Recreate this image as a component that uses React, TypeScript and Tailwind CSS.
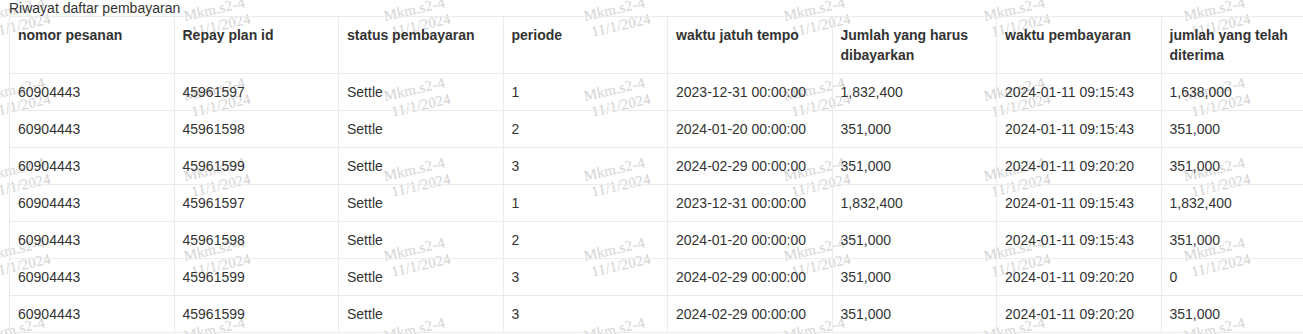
type PaymentRow = {
  orderNo: string;
  repayPlanId: string;
  status: string;
  period: string;
  dueAt: string;
  amountDue: string;
  paidAt: string;
  amountReceived: string;
};

const columns = [
  'nomor pesanan',
  'Repay plan id',
  'status pembayaran',
  'periode',
  'waktu jatuh tempo',
  'Jumlah yang harus dibayarkan',
  'waktu pembayaran',
  'jumlah yang telah diterima',
];

const rows: PaymentRow[] = [
  { orderNo: '60904443', repayPlanId: '45961597', status: 'Settle', period: '1', dueAt: '2023-12-31 00:00:00', amountDue: '1,832,400', paidAt: '2024-01-11 09:15:43', amountReceived: '1,638,000' },
  { orderNo: '60904443', repayPlanId: '45961598', status: 'Settle', period: '2', dueAt: '2024-01-20 00:00:00', amountDue: '351,000', paidAt: '2024-01-11 09:15:43', amountReceived: '351,000' },
  { orderNo: '60904443', repayPlanId: '45961599', status: 'Settle', period: '3', dueAt: '2024-02-29 00:00:00', amountDue: '351,000', paidAt: '2024-01-11 09:20:20', amountReceived: '351,000' },
  { orderNo: '60904443', repayPlanId: '45961597', status: 'Settle', period: '1', dueAt: '2023-12-31 00:00:00', amountDue: '1,832,400', paidAt: '2024-01-11 09:15:43', amountReceived: '1,832,400' },
  { orderNo: '60904443', repayPlanId: '45961598', status: 'Settle', period: '2', dueAt: '2024-01-20 00:00:00', amountDue: '351,000', paidAt: '2024-01-11 09:15:43', amountReceived: '351,000' },
  { orderNo: '60904443', repayPlanId: '45961599', status: 'Settle', period: '3', dueAt: '2024-02-29 00:00:00', amountDue: '351,000', paidAt: '2024-01-11 09:20:20', amountReceived: '0' },
  { orderNo: '60904443', repayPlanId: '45961599', status: 'Settle', period: '3', dueAt: '2024-02-29 00:00:00', amountDue: '351,000', paidAt: '2024-01-11 09:20:20', amountReceived: '351,000' },
];

// watermark tiles: 7 across, 5 down, sits under the table text
const marks = Array.from({ length: 35 }, (_, i) => i);

function Watermark() {
  return (
    <div className="pointer-events-none absolute left-[-84px] top-[-22px] grid grid-cols-[repeat(7,200px)] auto-rows-[80px]">
      {marks.map((i) => (
        <div key={i} className="flex items-center justify-center">
          <div className="rotate-[-13deg] text-center font-['Liberation_Serif',serif] text-[15px] leading-[17px] text-[#d2d2d2]">
            <div>Mkm.s2-4</div>
            <div className="pl-[6px]">11/1/2024</div>
          </div>
        </div>
      ))}
    </div>
  );
}

export default function App() {
  return (
    <div className="relative h-[334px] w-[1303px] overflow-hidden bg-white px-[9px] font-['Liberation_Sans',Arial,sans-serif] text-[14px] text-[#333]">
      <Watermark />

      <div className="relative h-[16px] leading-[16px]">Riwayat daftar pembayaran</div>

      <table className="relative w-[1317px] table-fixed border-collapse">
        <thead>
          <tr>
            {columns.map((c) => (
              <th key={c} className="border border-[#ebebeb] p-2 text-left align-top font-bold leading-5">
                {c}
              </th>
            ))}
          </tr>
        </thead>
        <tbody>
          {rows.map((r, idx) => (
            <tr key={idx}>
              {[r.orderNo, r.repayPlanId, r.status, r.period, r.dueAt, r.amountDue, r.paidAt, r.amountReceived].map((v, j) => (
                <td key={j} className="border border-[#ebebeb] p-2 leading-5">
                  {v}
                </td>
              ))}
            </tr>
          ))}
        </tbody>
      </table>
    </div>
  );
}
